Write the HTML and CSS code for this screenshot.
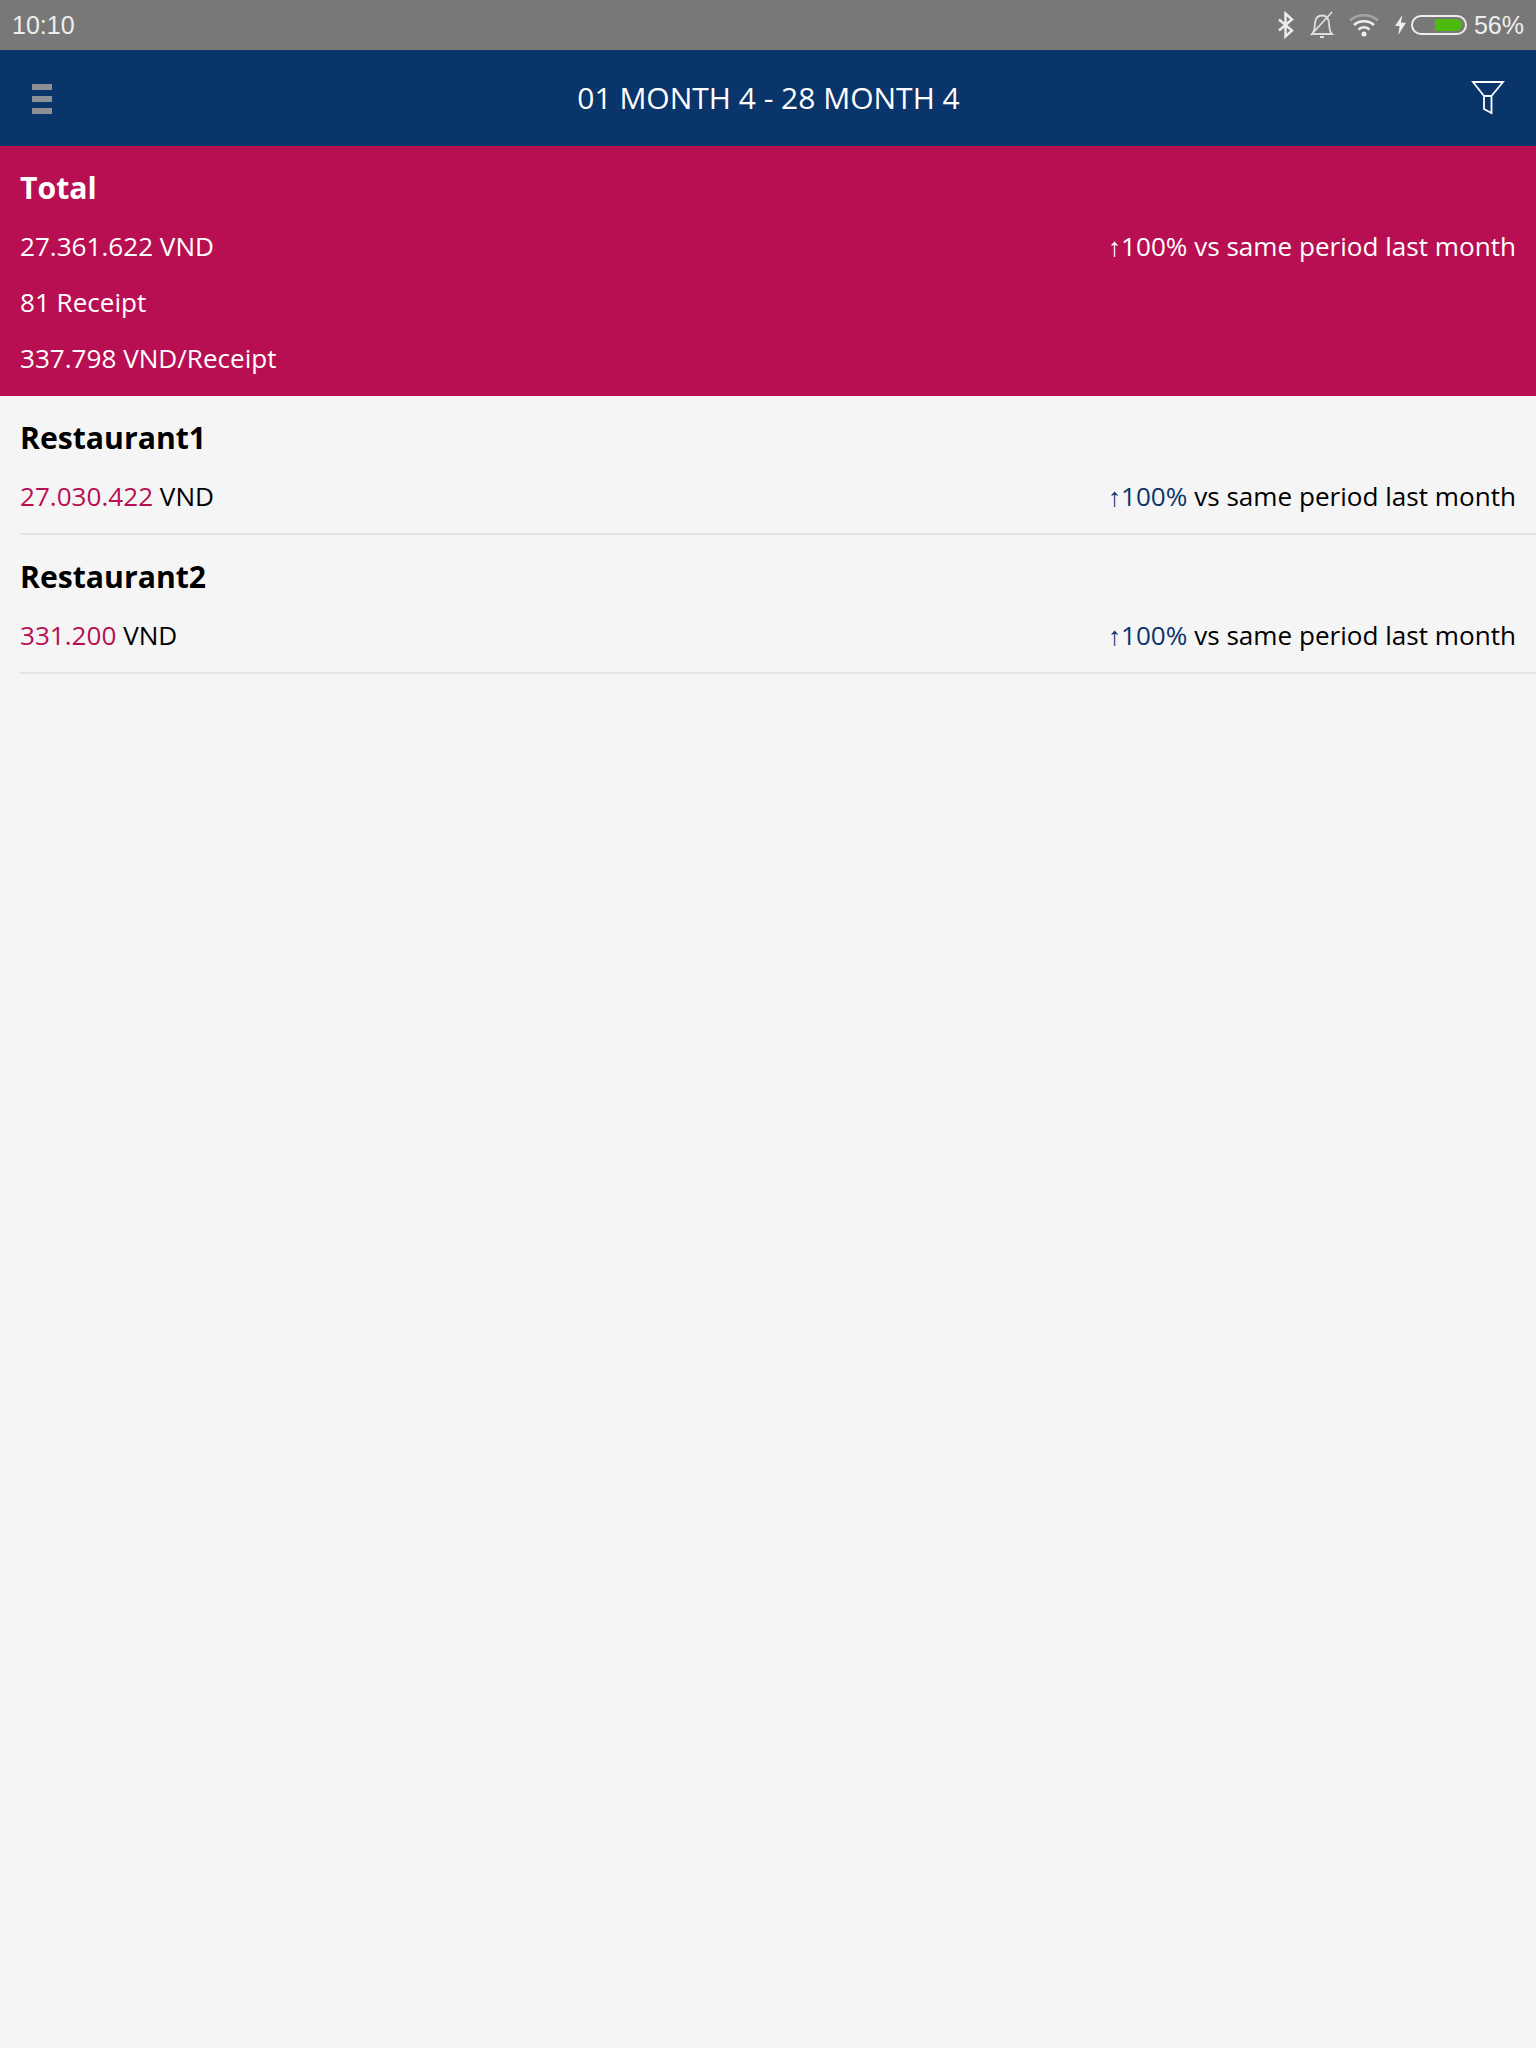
FILE: index.html
```html
<!DOCTYPE html>
<html lang="en">
<head>
<meta charset="utf-8">
<title>Report</title>
<link rel="stylesheet" href="styles.css">
</head>
<body>
<div class="status">
  <span class="time">10:10</span>
  <div class="status-icons">
    <svg class="ic-bt" width="18" height="28" viewBox="0 0 18 26"><path d="M2 7.500 15 18.500 8.500 24.500V1.500L15 7.500 2 18.500" fill="none" stroke="#eee" stroke-width="2.400"/></svg>
    <svg class="ic-bell" width="26" height="28" viewBox="0 0 26 28"><path d="M2 23H22C19 20 19.500 17 19 12C18.500 7 16 4.500 12 4.500C8 4.500 5.500 7 5 12C4.500 17 5 20 2 23ZM10 26H14M1 24 22 1" fill="none" stroke="#ddd" stroke-width="1.800"/></svg>
    <svg class="ic-wifi" width="32" height="24" viewBox="0 0 32 24"><path d="M2 7.500C9.500 .5 22.500 .5 30 7.500" fill="none" stroke="#a5a5a5" stroke-width="2.500"/><path d="M6 12C11.500 7 20.500 7 26 12M10.500 16.500C13.500 13.500 18.500 13.500 21.500 16.500" fill="none" stroke="#eee" stroke-width="2.500"/><circle cx="16" cy="21" r="2.500" fill="#eee"/></svg>
    <svg class="ic-bolt" width="11" height="20" viewBox="0 0 12 22"><path d="M8 0 0 12H5L3.500 22 12 8.500H6.500Z" fill="#eee"/></svg>
    <div class="battery"><div class="battery-fill"></div></div>
    <span class="percent">56%</span>
  </div>
</div>
<header class="nav">
  <div class="menu"><i></i><i></i><i></i></div>
  <h1 class="nav-title">01 MONTH 4 - 28 MONTH 4</h1>
  <svg class="filter" width="34" height="36" viewBox="0 0 34 36"><path d="M2 2H32L20.500 16V33L13 29V16ZM13 16H20.500" fill="none" stroke="#fff" stroke-width="1.800"/></svg>
</header>
<section class="total">
  <div class="title">Total</div>
  <div class="row"><span>27.361.622 VND</span><span><span class="arrow">↑</span>100% vs same period last month</span></div>
  <div class="row"><span>81 Receipt</span></div>
  <div class="row"><span>337.798 VND/Receipt</span></div>
</section>
<section class="item">
  <div class="title">Restaurant1</div>
  <div class="row"><span><span class="amount">27.030.422</span> VND</span><span><span class="pct"><span class="arrow">↑</span>100%</span> vs same period last month</span></div>
</section>
<section class="item">
  <div class="title">Restaurant2</div>
  <div class="row"><span><span class="amount">331.200</span> VND</span><span><span class="pct"><span class="arrow">↑</span>100%</span> vs same period last month</span></div>
</section>
</body>
</html>
```
FILE: styles.css
```css
* { box-sizing: border-box; }
html, body { margin: 0; padding: 0; }
body {
  min-height: 2048px;
  background: #f5f5f5;
  color: #000;
  font-family: "Open Sans", sans-serif;
  font-size: 26.1px;
}
.status {
  height: 50px;
  background: #787878;
  display: flex;
  align-items: center;
  justify-content: space-between;
  padding: 0 12px;
  color: #eee;
  font-family: "Liberation Sans", sans-serif;
  font-size: 25px;
}
.status-icons { display: flex; align-items: center; }
.ic-bt { margin-right: 15px; }
.ic-bell { margin-right: 12px; }
.ic-wifi { margin-right: 15px; }
.ic-bolt { margin-right: 5px; }
.battery {
  width: 56px;
  height: 20px;
  border: 2px solid #eee;
  border-radius: 10px;
  padding: 2px 3px 2px 22px;
  margin-right: 7px;
}
.battery-fill { height: 100%; background: #4dbb0e; border-radius: 0 6px 6px 0; }
.nav {
  height: 96px;
  background: #0a356b;
  display: grid;
  grid-template-columns: 1fr auto 1fr;
  align-items: center;
  padding: 0 31px 0 32px;
}
.menu { width: 20px; margin-top: 2px; display: flex; flex-direction: column; gap: 6px; }
.menu i { display: block; height: 6px; background: #8d8f96; }
.nav-title { margin: 0 0 2px; font-size: 30px; font-weight: 400; color: #fff; }
.filter { justify-self: end; }
.total { height: 250px; background: #b80f52; color: #fff; padding: 20px 20px 0; }
.title { font-size: 30.2px; font-weight: 700; height: 44px; line-height: 44px; margin-bottom: 8px; }
.row { display: flex; justify-content: space-between; height: 56px; line-height: 56px; }
.arrow { font-size: 26px; }
.item { height: 139px; margin-left: 20px; padding: 20px 20px 0 0; border-bottom: 2px solid #e4e4e4; }
.amount { color: #b80f52; }
.pct { color: #0a356b; }
```
